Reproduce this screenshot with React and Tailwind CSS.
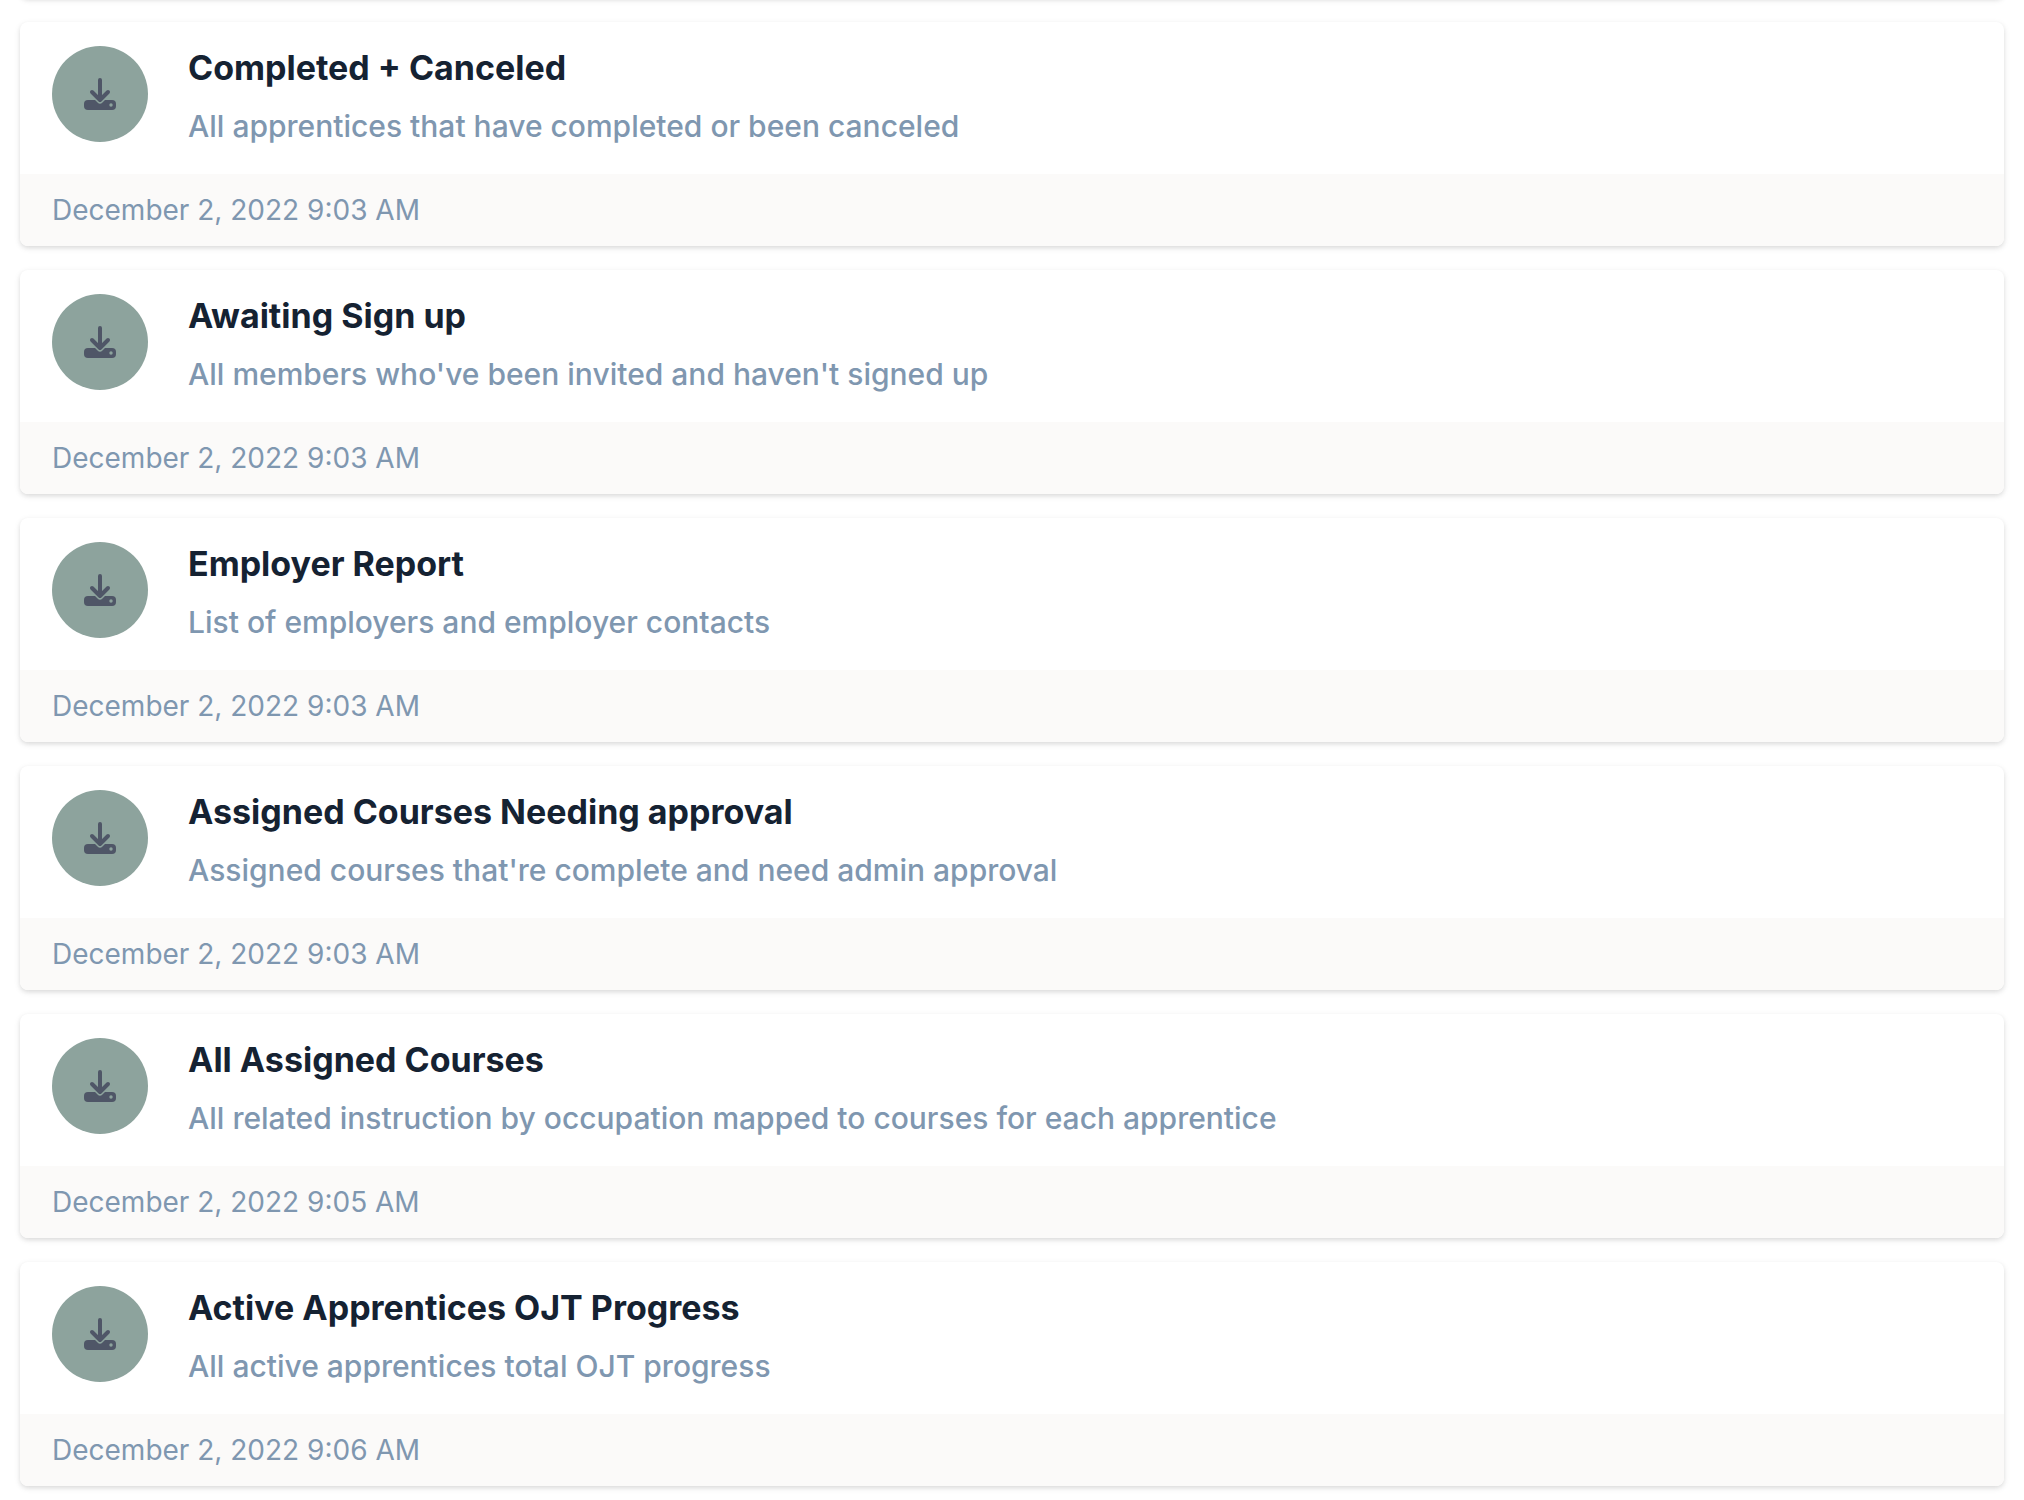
const reports = [
  {
    title: 'Completed + Canceled',
    description: 'All apprentices that have completed or been canceled',
    date: 'December 2, 2022 9:03 AM',
  },
  {
    title: 'Awaiting Sign up',
    description: "All members who've been invited and haven't signed up",
    date: 'December 2, 2022 9:03 AM',
  },
  {
    title: 'Employer Report',
    description: 'List of employers and employer contacts',
    date: 'December 2, 2022 9:03 AM',
  },
  {
    title: 'Assigned Courses Needing approval',
    description: "Assigned courses that're complete and need admin approval",
    date: 'December 2, 2022 9:03 AM',
  },
  {
    title: 'All Assigned Courses',
    description: 'All related instruction by occupation mapped to courses for each apprentice',
    date: 'December 2, 2022 9:05 AM',
  },
  {
    title: 'Active Apprentices OJT Progress',
    description: 'All active apprentices total OJT progress',
    date: 'December 2, 2022 9:06 AM',
  },
];

function DownloadIcon() {
  return (
    <svg viewBox="0 0 32 32" className="w-8 h-8" fill="none" strokeLinecap="round" strokeLinejoin="round" aria-hidden="true">
      <rect x="0" y="22" width="32" height="10" rx="4" fill="#4f5667" />
      {/* gap between the arrow head and the tray */}
      <path d="M8 14l8 8 8-8" stroke="#8da39d" strokeWidth="7" />
      <path d="M16 2v19M8 14l8 8 8-8" stroke="#4f5667" strokeWidth="4" />
      <circle cx="27" cy="27" r="1.7" fill="#8da39d" />
    </svg>
  );
}

function ReportCard({ title, description, date }) {
  return (
    <article className="bg-white rounded-lg overflow-hidden shadow-[0_2px_6px_rgba(0,0,0,0.1),0_2px_4px_rgba(0,0,0,0.06)]">
      <div className="flex gap-10 px-8 py-6">
        <button
          type="button"
          aria-label={`Download ${title}`}
          className="w-24 h-24 shrink-0 rounded-full bg-[#8da39d] flex items-center justify-center"
        >
          <DownloadIcon />
        </button>
        <div className="min-w-0">
          <h2 className="text-[34px] leading-11 font-bold text-[#152232]">{title}</h2>
          <p className="mt-3 text-[30px] leading-12 font-medium text-[#7f97b0]">{description}</p>
        </div>
      </div>
      <footer className="bg-[#fbfaf9] px-8 py-4 text-[28px] leading-10 text-[#7f97b0]">
        <time>{date}</time>
      </footer>
    </article>
  );
}

export default function App() {
  return (
    <main className="flex flex-col gap-6 px-5 pb-3 bg-white font-['Inter',sans-serif]">
      {/* bottom edge of the card scrolled off the top */}
      <div className="h-2 -mt-[10px] rounded-b-lg bg-[#fbfaf9] shadow-[0_2px_6px_rgba(0,0,0,0.1),0_2px_4px_rgba(0,0,0,0.06)]" />
      {reports.map((report) => (
        <ReportCard key={report.title} {...report} />
      ))}
    </main>
  );
}
